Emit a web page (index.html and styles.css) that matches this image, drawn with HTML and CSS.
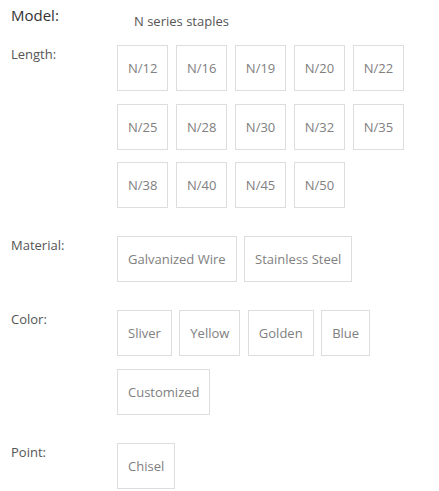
FILE: index.html
```html
<!DOCTYPE html>
<html lang="en">
<head>
<meta charset="utf-8">
<title>Specs</title>
<link rel="stylesheet" href="styles.css">
</head>
<body>
<div class="spec">
  <div class="row model-row">
    <div class="label model-label">Model:</div>
    <div class="value">N series staples</div>
  </div>
  <div class="row">
    <div class="label">Length:</div>
    <div class="opts">
      <span class="opt">N/12</span><span class="opt">N/16</span><span class="opt">N/19</span><span class="opt">N/20</span><span class="opt">N/22</span>
      <span class="opt">N/25</span><span class="opt">N/28</span><span class="opt">N/30</span><span class="opt">N/32</span><span class="opt">N/35</span>
      <span class="opt">N/38</span><span class="opt">N/40</span><span class="opt">N/45</span><span class="opt">N/50</span>
    </div>
  </div>
  <div class="row">
    <div class="label">Material:</div>
    <div class="opts">
      <span class="opt">Galvanized Wire</span><span class="opt">Stainless Steel</span>
    </div>
  </div>
  <div class="row">
    <div class="label">Color:</div>
    <div class="opts">
      <span class="opt">Sliver</span><span class="opt">Yellow</span><span class="opt">Golden</span><span class="opt">Blue</span><span class="opt">Customized</span>
    </div>
  </div>
  <div class="row last">
    <div class="label">Point:</div>
    <div class="opts">
      <span class="opt">Chisel</span>
    </div>
  </div>
</div>
</body>
</html>
```
FILE: styles.css
```css
html, body {
  margin: 0;
  padding: 0;
  background: #fff;
}
body {
  font-family: "Open Sans", "DejaVu Sans", sans-serif;
}
.spec {
  padding: 4px 0 0 11px;
}
.row {
  display: flex;
  align-items: flex-start;
  margin-bottom: 15.5px;
}
.row.last {
  margin-bottom: 0;
}
.row.last .opt {
  margin-bottom: 0;
}
.model-row {
  margin-bottom: 14px;
}
.label {
  flex: none;
  width: 106px;
  font-size: 13px;
  line-height: 20px;
  color: #555;
  margin-top: -1px;
}
.model-label {
  font-size: 15px;
  line-height: 22px;
  color: #333;
  margin-top: 0;
}
.value {
  margin-top: 7px;
  padding-left: 17px;
  font-size: 13px;
  line-height: 20px;
  color: #555;
}
.opts {
  flex: 1;
  display: flex;
  flex-wrap: wrap;
}
.opt {
  box-sizing: border-box;
  height: 46px;
  line-height: 44px;
  padding: 0 10px;
  border: 1px solid #ddd;
  margin: 0 7.5px 12.5px 0;
  font-size: 13px;
  color: #808080;
  white-space: nowrap;
}
```
